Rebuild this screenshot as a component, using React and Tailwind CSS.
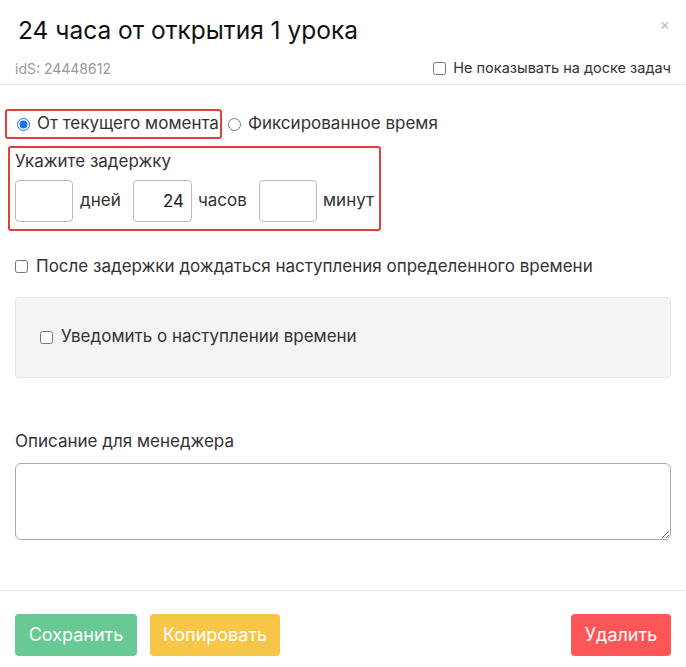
import React from "react";

export default function App() {
  return (
    <div className="w-[686px] h-[667px] bg-white text-[#333] font-['Inter',sans-serif] overflow-hidden">
      {/* header */}
      <div className="relative px-[15px] pt-[14px]">
        <h1 className="pl-[3px] text-[24.5px] leading-[32px] text-[#111]">24 часа от открытия 1 урока</h1>
        <span className="absolute right-[16px] top-[12px] text-[16px] text-[#bbb]">×</span>
        <div className="flex items-center justify-between mt-[12px] h-[20px]">
          <span className="text-[14px] text-[#999]">idS: 24448612</span>
          <label className="flex items-center gap-[7px] text-[14.5px] text-[#333]">
            <input type="checkbox" className="w-[13px] h-[13px] m-0" />
            Не показывать на доске задач
          </label>
        </div>
      </div>
      <div className="mt-[6px] border-t border-[#e5e5e5]" />

      {/* body */}
      <div className="px-[15px] pt-[24px] text-[17px]">
        <div className="flex items-center">
          <label className="-ml-[10px] flex items-center gap-[7px] h-[30px] pl-[10px] pr-[1px] border-2 border-[#e0403a] rounded-[3px]">
            <input type="radio" name="mode" defaultChecked className="w-[13px] h-[13px] m-0 accent-[#1a73e8]" />
            От текущего момента
          </label>
          <label className="ml-[6px] flex items-center gap-[7px]">
            <input type="radio" name="mode" className="w-[13px] h-[13px] m-0" />
            Фиксированное время
          </label>
        </div>

        <div className="-ml-[7px] mt-[7px] w-[373px] border-2 border-[#e0403a] rounded-[3px] pl-[5px] pt-[2px] pb-[7px]">
          <div className="leading-[22px]">Укажите задержку</div>
          <div className="flex items-center mt-[8px]">
            <input className="w-[58px] h-[42px] border border-[#bbb] rounded-[4px] px-2 text-right" />
            <span className="ml-[7px] w-[53px]">дней</span>
            <input defaultValue="24" className="w-[59px] h-[42px] border border-[#bbb] rounded-[4px] px-[7px] text-right text-[#222]" />
            <span className="ml-[6px] w-[61px]">часов</span>
            <input className="w-[58px] h-[42px] border border-[#bbb] rounded-[4px] px-2 text-right" />
            <span className="ml-[6px]">минут</span>
          </div>
        </div>

        <label className="flex items-center gap-[8px] mt-[23px]">
          <input type="checkbox" className="w-[13px] h-[13px] m-0" />
          После задержки дождаться наступления определенного времени
        </label>

        <div className="mt-[17px] h-[81px] bg-[#f4f4f4] border border-[#e6e6e6] rounded-[4px] flex items-center pl-[24px]">
          <label className="flex items-center gap-[8px]">
            <input type="checkbox" className="w-[13px] h-[13px] m-0" />
            Уведомить о наступлении времени
          </label>
        </div>

        <div className="mt-[52px] leading-[22px]">Описание для менеджера</div>
        <textarea className="mt-[11px] block w-full h-[77px] border border-[#aaa] rounded-[6px] resize-y" />
      </div>

      <div className="mt-[50px] border-t border-[#e5e5e5]" />

      {/* footer */}
      <div className="flex items-center px-[15px] pt-[23px] text-[18px]">
        <button className="h-[42px] w-[122px] rounded-[4px] bg-[#68c994] text-white">Сохранить</button>
        <button className="ml-[13px] h-[42px] w-[130px] rounded-[4px] bg-[#f7c548] text-white">Копировать</button>
        <button className="ml-auto h-[42px] w-[100px] rounded-[4px] bg-[#fe5656] text-white">Удалить</button>
      </div>
    </div>
  );
}
